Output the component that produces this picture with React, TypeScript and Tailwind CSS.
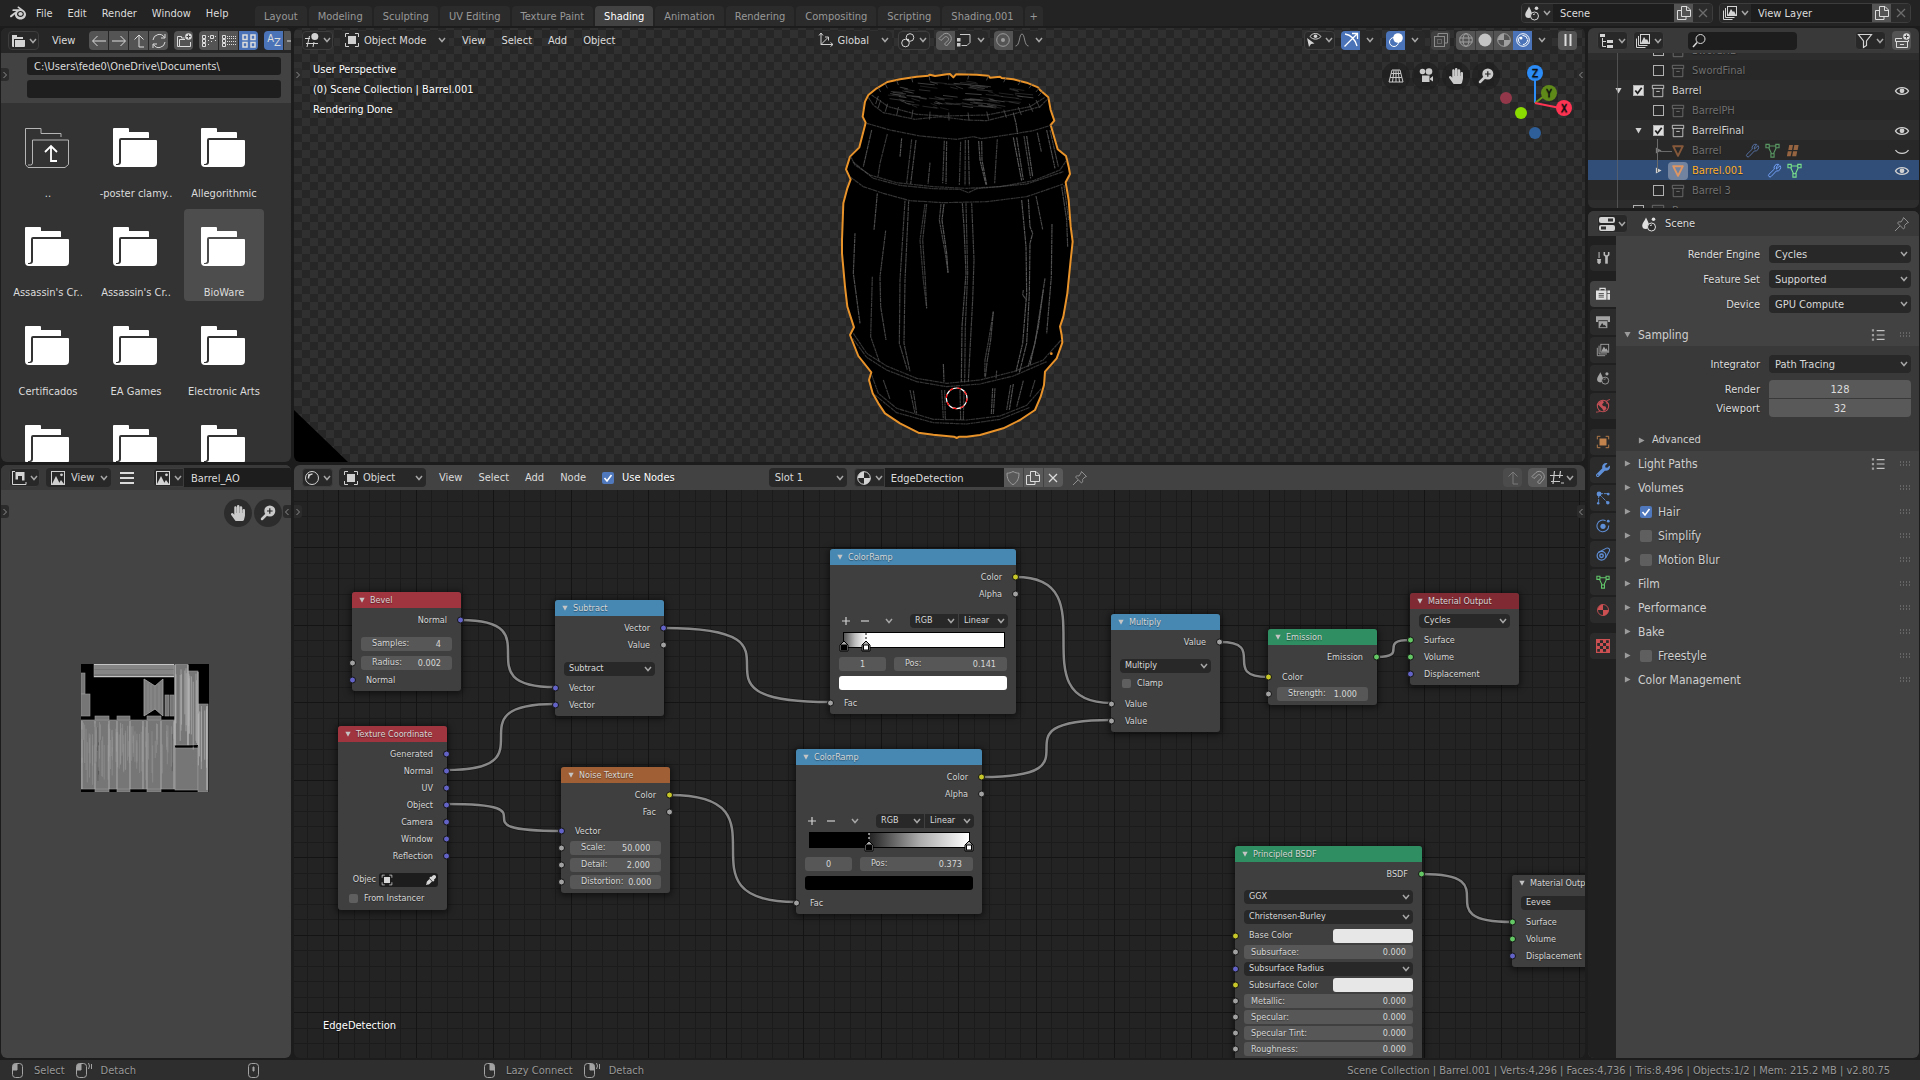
import React from 'react'
import { SiBlender } from 'react-icons/si'
import { FaHandPaper, FaEyeDropper, FaWrench } from 'react-icons/fa'
import clsx from 'clsx'

const rnd = (i: number) => {
  const v = Math.sin(i * 12.9898) * 43758.5453
  return v - Math.floor(v)
}

/* ---------- icons, all on a 16px grid ---------- */

const sceneGlyph = (
  <>
    <path d="M5 1.5C6.5 5 8 7 8 9.2A3.6 3.6 0 0 1 4.8 13 3.6 3.6 0 0 1 1.2 9.5C1.2 7 3.6 5 5 1.5Z" fill="currentColor" stroke="none" />
    <circle cx="10.5" cy="11" r="4" fill="#2b2b2b" />
    <path d="M9 10a2 2 0 0 1 2-1" />
    <circle cx="12.5" cy="3.2" r="1.8" fill="currentColor" stroke="none" />
  </>
)
const imageGlyph = (
  <>
    <rect x="1.5" y="1.5" width="13" height="13" />
    <path d="M2 14 6 6l4 8Z" fill="currentColor" stroke="none" />
    <path d="M8.5 14 11 10l3 4Z" fill="currentColor" stroke="none" />
    <circle cx="11.5" cy="4.8" r="1.4" fill="currentColor" stroke="none" />
  </>
)
const layersGlyph = (
  <>
    <rect x="5.5" y="1.5" width="9" height="9" />
    <path d="M3.5 3v9.500h9M1.500 5.500v9h9" />
    <path d="M6 10 9 4l2 3 1-1 2 4Z" fill="currentColor" stroke="none" />
  </>
)

const glyphs: Record<string, React.ReactNode> = {
  folder: (
    <>
      <path d="M2 2h5v2h6v2H4v8H3a1 1 0 0 1-1-1Z" fill="currentColor" stroke="none" />
      <path d="M5 7h10v6a1 1 0 0 1-1 1H5Z" fill="currentColor" stroke="none" />
    </>
  ),
  left: <path d="M15 8H2M6.500 3 1.500 8l5 5" />,
  right: <path d="M1 8h13M9.500 3l5 5-5 5" />,
  up: <path d="M13 14H8V2M3.500 6.500 8 2l4.500 4.500" />,
  refresh: <path d="M2 7a6.200 6.200 0 0 1 11.500-2.500M14 9a6.200 6.200 0 0 1-11.500 2.500M14 1v4H10M2 15v-4h4" />,
  newFolder: (
    <>
      <path d="M14.500 9v4.500h-11v-7H9M3.500 13.500h-2v-10h4v1.500h3" />
      <circle cx="12.500" cy="3.500" r="3.300" fill="currentColor" stroke="none" />
      <path d="M12.500 1.500v4M10.500 3.500h4" stroke="#444" />
    </>
  ),
  listV: (
    <>
      <path d="M1.500 2.500h3v3h-3zM1.500 6.500h3v3h-3zM1.500 10.500h3v3h-3zM9.500 2.500h3v3h-3z" />
      <path d="M7 3.500h1M7 7.500h1M7 11.500h1M14 3.500h1M14 7.500h1M10 8.500h2" strokeDasharray="1 1" />
    </>
  ),
  listH: (
    <>
      <path d="M1.500 2.500h3v3h-3zM1.500 6.500h3v3h-3zM1.500 10.500h3v3h-3z" />
      <path d="M6 3.500h9M6 5.500h9M6 8.500h9M6 11.500h9" strokeDasharray="1 1" />
    </>
  ),
  thumbs: <path strokeWidth="1.500" d="M2 2h4v4.500H2zM10 2h4v4.500h-4zM2 9.500h4V14H2zM10 9.500h4V14h-4z" />,
  view3d: (
    <>
      <path d="M1 6.500h5M2 11.500h12M5.500 4 3 15M10 10 9 15" />
      <circle cx="10.800" cy="4.500" r="3.500" fill="currentColor" stroke="none" />
    </>
  ),
  object: (
    <>
      <path d="M1.500 5V1.500H5M11 1.500h3.500V5M14.500 11v3.500H11M5 14.500H1.500V11" />
      <rect x="4" y="4" width="8" height="8" fill="currentColor" stroke="none" />
    </>
  ),
  orient: <path d="M3 1v11.500h12M1 3.500 3 1l2 2.500M12.500 10.500l2.500 2-2.500 2M3 12.500l7-7M7 5h3.500v3.500" />,
  pivot: (
    <>
      <circle cx="10" cy="5.500" r="3.800" />
      <circle cx="5.500" cy="11" r="3.800" />
      <circle cx="8" cy="8" r="1.200" fill="currentColor" stroke="none" />
    </>
  ),
  magnet: <path d="M2 6.500 6 2.500c5-4 11 3 7 7.500L9.500 14 7.500 12l3.500-3.500c2-2-1.500-5-3.200-3.500L4 8.500Z" />,
  snap: (
    <>
      <path d="M4 2.500h10v8l-3 3H5.500" />
      <path d="M1 6h3.500v3.500H1zM1 11h3.500v3.500H1z" fill="currentColor" stroke="none" />
    </>
  ),
  prop: (
    <>
      <circle cx="8" cy="8" r="6.300" />
      <circle cx="8" cy="8" r="2" fill="currentColor" stroke="none" />
    </>
  ),
  curve: <path d="M1.500 14C6 14 5 2 8 2s2 12 6.500 12" />,
  visibility: (
    <>
      <path d="M4 4.500C6.500.5 12 .5 15 4.500 12 8 7 8 4 4.500Z" />
      <circle cx="9.500" cy="4.300" r="1.800" fill="currentColor" stroke="none" />
      <path d="m1 6 2 9 2-3 3.500-.5Z" fill="currentColor" stroke="none" />
    </>
  ),
  gizmo: <path strokeWidth="1.300" d="M2 2c6 1 10 5 12 12M1.500 14.500 14 2M9 1.500h5.500V7" />,
  overlay: (
    <>
      <circle cx="6" cy="10" r="4.500" />
      <circle cx="10" cy="6" r="4.800" fill="currentColor" stroke="none" />
    </>
  ),
  xray: (
    <>
      <path d="M5 4V1.500h9.500V11H12" />
      <rect x="1.500" y="4.500" width="10" height="10" />
      <rect x="4.500" y="7.500" width="4" height="4" strokeDasharray="1 1" />
    </>
  ),
  wire: (
    <>
      <circle cx="8" cy="8" r="6.300" />
      <ellipse cx="8" cy="8" rx="3" ry="6.300" />
      <path d="M1.500 6h13M1.500 10h13" />
    </>
  ),
  solid: <circle cx="8" cy="8" r="6.500" fill="currentColor" stroke="none" />,
  matprev: (
    <>
      <circle cx="8" cy="8" r="6.300" />
      <path d="M8 1.500A6.500 6.500 0 0 0 2 8h6ZM8 8h6.500A6.500 6.500 0 0 1 8 14.500Z" fill="currentColor" stroke="none" />
    </>
  ),
  rendered: (
    <>
      <circle cx="8" cy="8" r="6.300" />
      <circle cx="8" cy="8" r="4.500" strokeDasharray="7 3" />
      <circle cx="6" cy="6" r="1.500" fill="currentColor" stroke="none" />
    </>
  ),
  shader: (
    <>
      <circle cx="8" cy="8" r="6.500" />
      <path d="M4.500 8.500A4 4 0 0 1 8.500 4" strokeWidth="1.500" />
      <circle cx="5" cy="5" r="1" fill="currentColor" stroke="none" />
    </>
  ),
  pause: <path strokeWidth="2" d="M5.500 2v12M10.500 2v12" />,
  grid: <path d="M4 2h8l3 12H1ZM3.200 5.500h9.600M2.200 9.500h11.600M8 2v12M6 2 4.500 14M10 2l1.500 12" />,
  camera: (
    <>
      <circle cx="4.500" cy="3.500" r="2.800" fill="currentColor" stroke="none" />
      <circle cx="11" cy="3.500" r="3.300" fill="currentColor" stroke="none" />
      <path d="M4 7.500h7.500V14H4zM12 10.500l3-2.500v5.500l-3-2Z" fill="currentColor" stroke="none" />
    </>
  ),
  zoom: (
    <>
      <circle cx="9.800" cy="6" r="5.500" fill="currentColor" stroke="none" />
      <path d="M6 10 2 14" strokeWidth="2.500" strokeLinecap="round" />
      <path d="M9.800 3.200v5.600M7 6h5.600" stroke="#222" strokeWidth="1.200" />
    </>
  ),
  scene: sceneGlyph,
  image: imageGlyph,
  layers: layersGlyph,
  copy: <path d="M5.500 1.500H11L14.500 5v6.500h-9zM10.500 2v3.500H14M5 5.500H1.500v9h8.500V12" />,
  close: <path strokeWidth="1.300" d="m4 4 8 8M12 4l-8 8" />,
  outliner: (
    <>
      <path d="M1 1h5v3H1zM8 7h6v3H8zM8 12h6v3H8z" fill="currentColor" stroke="none" />
      <path d="M3.500 5v8.500H7M3.500 8.500H7" />
    </>
  ),
  search: (
    <>
      <circle cx="9.500" cy="6" r="4.500" />
      <path d="M6 9.500 2 14" strokeWidth="1.500" />
    </>
  ),
  filter: <path d="M1.500 1.500h13L9.500 8v4.500l-3 2V8Z" strokeWidth="1.200" />,
  collection: <path d="M1.500 1.500h13v3.500h-13zM2.500 5v9.500h11V5M6 8.500h4" />,
  newCollection: (
    <>
      <path d="M8 5.500H1.500v3h13V7M2.500 8.500v6h11v-6M6 11.500h4" />
      <circle cx="12.500" cy="3.500" r="3.300" fill="currentColor" stroke="none" />
      <path d="M12.500 1.500v4M10.500 3.500h4" stroke="#444" />
    </>
  ),
  mesh: <path strokeWidth="2.200" strokeLinejoin="round" d="M2.500 2.500h11L8 13.500Z" />,
  wrench: <path d="M10 6.500 14 2.800A3.800 3.800 0 0 1 10 8.500l-5.500 5.800a1.600 1.600 0 0 1-2.500-2.200L7.800 6.500A3.800 3.800 0 0 1 12.500 1.500L10 4.300Z" />,
  meshData: <path strokeWidth="1.200" d="M1 1.500h3.500V5H1zM11.500 1.500H15V5h-3.500zM6.300 11.500h3.400V15H6.300zM4.500 3.200h7M4 5l3 6.500M12 5 9 11.500" />,
  lattice: <path d="M4.500 2h4L7.500 7.500h-4ZM10 2h4.500l-1 5.500H9ZM3 8.800h4.200L6 14H2ZM8.600 8.800H13l-1 5.200H7.600Z" fill="currentColor" stroke="none" />,
  eye: (
    <>
      <path d="M1.500 8C4 3.500 12 3.500 14.500 8 12 12.500 4 12.500 1.500 8Z" strokeWidth="1.400" />
      <circle cx="8" cy="7.800" r="2.400" fill="currentColor" stroke="none" />
    </>
  ),
  eyeClosed: <path d="M1.500 7C4 11.500 12 11.500 14.500 7" strokeWidth="1.200" />,
  properties: (
    <>
      <rect x="0" y="1" width="16" height="6" rx="2" fill="currentColor" stroke="none" />
      <rect x="0" y="9" width="16" height="6" rx="2" fill="currentColor" stroke="none" />
      <path d="M9 4h5M2 12h5" stroke="#333" strokeWidth="3" />
    </>
  ),
  pin: <path d="m9.500 1.500 5 5-1.500.5-2.500 2.500c.5 2 0 3-1 3.500L3.500 7c.5-1 1.500-1.500 3.500-1L9 3ZM6 10l-5 5" />,
  tools: (
    <>
      <path d="M3.500 1v7" strokeWidth="1.200" />
      <path d="M1 9h5l-.5 1.500v3l-2 1.500-2-1.500v-3Z" fill="currentColor" stroke="none" />
      <path d="M12 6v8.500" strokeWidth="3" />
      <path d="M9.500 1v3.500l2.500 2 2.500-2V1" strokeWidth="1.800" />
    </>
  ),
  render: (
    <>
      <path d="M4.500 4V1.500h6V4" strokeWidth="1.300" />
      <path d="M0 4h12v10.500H0zM13 4h3v3h-3zM13 8h3v6.500h-3z" fill="currentColor" stroke="none" />
      <path d="M3 7.500h6M3 9.500h6M3 11.500h6" stroke="#444" />
    </>
  ),
  output: (
    <>
      <path d="M0 1.500h16V8h-2.500V6h-11v2H0Z" fill="currentColor" stroke="none" />
      <path d="M3 7h10v8H3z" fill="currentColor" stroke="none" />
      <path d="m4 14 3-5 2 3 1-1 2 3Z" fill="#2b2b2b" stroke="none" />
    </>
  ),
  world: (
    <>
      <circle cx="8" cy="8" r="6.500" strokeWidth="1.200" />
      <path d="M2 6C4 3 6 2 8 2l1 2-2 2 1 2 3 .5 1 2.500-3 3c-2-2-1-3-3-4Z M11 2.500 14 6l-2-.5Z" fill="currentColor" stroke="none" />
      <path d="M0 15c3 0 4-1 5-1M12 2l4-1.500" />
    </>
  ),
  particles: (
    <>
      <path d="M3 3v10M3 3h11M3 3l10 10" strokeDasharray="5 1" />
      <circle cx="3.500" cy="3.500" r="2.800" fill="currentColor" stroke="none" />
      <circle cx="14" cy="3.500" r="1.600" fill="currentColor" stroke="none" />
      <circle cx="13.500" cy="13.500" r="2" fill="currentColor" stroke="none" />
      <circle cx="2.500" cy="14" r="1.400" fill="currentColor" stroke="none" />
    </>
  ),
  physics: (
    <>
      <path d="M11 2A6.700 6.700 0 1 0 14.500 7.500" strokeWidth="1.200" />
      <circle cx="8" cy="8.300" r="3" fill="currentColor" stroke="none" />
      <circle cx="14" cy="2.500" r="1.600" fill="currentColor" stroke="none" />
    </>
  ),
  constraints: (
    <>
      <path d="M2.500 6.200 12 1.300a2.500 2.500 0 0 1 3.200 3.500L11 12.500" strokeWidth="1.200" />
      <circle cx="6.300" cy="10" r="5" strokeWidth="1.400" />
      <circle cx="6.300" cy="10" r="2" strokeWidth="1.600" />
    </>
  ),
  texture: (
    <>
      <rect x=".7" y=".7" width="14.600" height="14.600" strokeWidth="1.400" />
      <path d="M1 1h3.500v3.500H1zM8 1h3.500v3.500H8zM4.500 4.500H8V8H4.500zM11.500 4.500H15V8h-3.500zM1 8h3.500v3.500H1zM8 8h3.500v3.500H8zM4.500 11.500H8V15H4.500zM11.500 11.500H15V15h-3.500z" fill="currentColor" stroke="none" />
    </>
  ),
  uvEditor: (
    <>
      <path d="M1.500 1v13.500H15V12M1.500 1.500H4" />
      <path d="M4.500 2h9v8.500h-2.500V6H7v3.500H4.500Z" fill="currentColor" stroke="none" />
    </>
  ),
  burger: <path strokeWidth="2" d="M1 3h14M1 8h14M1 13h14" />,
  shield: <path d="M8 1.500c2 1.200 4 1.700 6 1.700 0 5-1.500 9-6 11.500-4.500-2.500-6-6.500-6-11.500 2 0 4-.5 6-1.700Z" />,
  presets: (
    <>
      <path d="M6.500 3h9M6.500 8h9M6.500 13h9" strokeWidth="1.200" />
      <path d="M1 1.500h2.500v2.500H1zM1 6.800h2.500v2.500H1zM1 12h2.500v2.500H1z" fill="currentColor" stroke="none" opacity=".7" />
    </>
  ),
  nodeSnap: <path d="M1 5.500h13M2 11.500h9M5.500 1 4 14M11.500 1l-1 7M12 13h3" strokeWidth="1.200" />,
}

const Icon = ({ name, className }: { name: string; className?: string }) => (
  <svg viewBox="0 0 16 16" fill="none" stroke="currentColor" className={clsx('shrink-0', className || 'h-4 w-4')}>
    {glyphs[name]}
  </svg>
)

const Chevron = ({ className }: { className?: string }) => (
  <svg viewBox="0 0 8 6" fill="none" stroke="currentColor" strokeWidth="1.500" className={clsx('h-[6px] w-2 shrink-0 text-[#a6a6a6]', className)}>
    <path d="m1 1 3 3.500L7 1" />
  </svg>
)

const Triangle = ({ open, className }: { open?: boolean; className?: string }) => (
  <svg viewBox="0 0 8 8" className={clsx('shrink-0', className || 'h-[7px] w-[7px] text-[#9c9c9c]')}>
    <path d={open ? 'M.5 1h7L4 7.500Z' : 'M1 .5v7L7.500 4Z'} fill="currentColor" />
  </svg>
)

/* ---------- widgets ---------- */

type WidgetProps = { icon?: string; label: string; className?: string; children?: React.ReactNode }

const MenuButton = ({ icon, label, className }: WidgetProps) => (
  <button aria-label={label} className={clsx('flex h-[19px] shrink-0 items-center justify-center gap-[3px] rounded-[4px] border border-[#3d3d3d] bg-[#282828] text-[#d4d4d4]', className || 'w-[31px]')}>
    {icon && <Icon name={icon} />}
    <Chevron />
  </button>
)

const ToolButton = ({ icon, label, className, children }: WidgetProps) => (
  <button aria-label={label} className={clsx('flex h-[19px] w-[19px] shrink-0 items-center justify-center', className)}>
    {icon ? <Icon name={icon} /> : children}
  </button>
)

type SelectProps = { label: string; value: string; icon?: string; className?: string; pad?: string }

const Select = ({ label, value, icon, className, pad }: SelectProps) => (
  <div className={clsx('relative flex shrink-0 items-center rounded-[4px] bg-[#282828]', className)}>
    {icon && <Icon name={icon} className="pointer-events-none absolute left-1 h-4 w-4 text-[#cfcfcf]" />}
    <select aria-label={label} defaultValue={value} className={clsx('h-full w-full appearance-none text-[#d9d9d9] outline-none', pad || 'pl-[6px] pt-px')}>
      <option>{value}</option>
    </select>
    <Chevron className="pointer-events-none absolute right-[3px]" />
  </div>
)

const CheckBox = ({ id, checked, className }: { id: string; checked?: boolean; className?: string }) => (
  <span className={clsx('relative flex shrink-0', className || 'h-3 w-3')}>
    <input id={id} type="checkbox" defaultChecked={checked} className="peer h-full w-full appearance-none rounded-[2px] bg-[#5f5f5f] checked:bg-[#4f78bd]" />
    <svg viewBox="0 0 12 12" className="pointer-events-none absolute hidden h-full w-full peer-checked:block" fill="none" stroke="#fff" strokeWidth="1.600">
      <path d="m2.500 6 2.500 3 4.500-6" />
    </svg>
  </span>
)

const MenuText = ({ children }: { children: string }) => <button className="shrink-0 pt-px">{children}</button>

const RegionTab = ({ right, className }: { right?: boolean; className?: string }) => (
  <button aria-label="Toggle region" className={clsx('absolute z-10 flex h-[13px] w-2 items-center justify-center bg-[#2b2b2b] text-[#8c8c8c]', right ? 'right-0 rounded-l-[3px]' : 'left-0 rounded-r-[3px]', className)}>
    <svg viewBox="0 0 6 8" className="h-2 w-[6px]" fill="none" stroke="currentColor">
      <path d={right ? 'M4.500 1 1.500 4l3 3' : 'M1.500 1l3 3-3 3'} />
    </svg>
  </button>
)

const NavButton = ({ label, children }: { label: string; children: React.ReactNode }) => (
  <button aria-label={label} className="flex h-7 w-7 items-center justify-center rounded-full bg-[#1c1c1c]/60 text-[#cacaca]">{children}</button>
)

/* ---------- top bar ---------- */

const tabs = ['Layout', 'Modeling', 'Sculpting', 'UV Editing', 'Texture Paint', 'Shading', 'Animation', 'Rendering', 'Compositing', 'Scripting', 'Shading.001', '+']

const IdField = ({ icon, label }: { icon: string; label: string }) => (
  <div className="flex h-5 shrink-0 items-center overflow-hidden rounded-[4px] border border-[#3d3d3d]">
    <button aria-label={`Browse ${label}`} className="flex h-full w-[31px] items-center justify-center gap-[3px] bg-[#282828] text-[#d4d4d4]">
      <Icon name={icon} />
      <Chevron />
    </button>
    <input aria-label={label} defaultValue={label} className="h-full w-[121px] bg-[#1d1d1d] pl-[7px] outline-none" />
    <ToolButton icon="copy" label={`New ${label}`} className="bg-[#545454]" />
    <ToolButton icon="close" label={`Remove ${label}`} className="bg-[#2b2b2b] text-[#6d6d6d]" />
  </div>
)

const TopBar = () => (
  <header className="flex h-[26px] shrink-0 items-center bg-[#232323]">
    <SiBlender className="ml-[10px] h-4 w-4 shrink-0 text-[#cfcfcf]" />
    <nav className="ml-[10px] flex w-[219px] gap-[15px]">
      {['File', 'Edit', 'Render', 'Window', 'Help'].map((m) => (
        <MenuText key={m}>{m}</MenuText>
      ))}
    </nav>
    <div className="flex h-5 gap-[2px] self-end">
      {tabs.map((t) => (
        <button
          key={t}
          className={clsx('shrink-0 rounded-t-[4px] pt-px', t === '+' ? 'px-[5px]' : 'px-[9px]', t === 'Shading' ? 'bg-[#424242] text-white' : 'bg-[#2b2b2b] text-[#989898]')}
        >
          {t}
        </button>
      ))}
    </div>
    <div className="ml-auto flex gap-[6px] pr-[9px]">
      <IdField icon="scene" label="Scene" />
      <IdField icon="layers" label="View Layer" />
    </div>
  </header>
)

/* ---------- file browser ---------- */

const files = ['..', '-poster clamy..', 'Allegorithmic', "Assassin's Cr..", "Assassin's Cr..", 'BioWare', 'Certificados', 'EA Games', 'Electronic Arts', '', '', '']

const FolderArt = ({ parent }: { parent?: boolean }) => (
  <svg viewBox="0 0 44 40" className="h-10 w-11">
    {parent ? (
      <g fill="none" stroke="#b5b5b5">
        <path d="M36 9V5.500H16V.5H.5v36L3 39.500h37l3.500-3V12H7.500v23q0 2-2 2H3" />
        <path d="M32 33h-6V18M20 24l6-6 6 6" stroke="#fff" strokeWidth="1.800" />
      </g>
    ) : (
      <path
        fill="#fff"
        d="M0 1q0-1 1-1h14q1 0 1 1v3h19q1 0 1 1v5H8q-2 0-2 2v22q0 2-3 2v1h2q3 0 3-3V12h35q1 0 1 1v22q0 4-4 4H4q-4 0-4-4Z"
      />
    )}
  </svg>
)

const group = 'flex shrink-0 gap-px overflow-hidden rounded-[4px]'
const toolGrey = 'bg-[#545454]'

const FileBrowser = () => (
  <section className="relative flex w-[290px] shrink-0 flex-col overflow-hidden rounded-[6px] bg-[#333333]">
    <div className="flex h-[25px] shrink-0 items-center overflow-hidden bg-[#262626] pl-[7px]">
      <MenuButton icon="folder" label="Editor type" />
      <span className="ml-[13px] mr-[14px]"><MenuText>View</MenuText></span>
      <div className={group}>
        <ToolButton icon="left" label="Back" className={toolGrey} />
        <ToolButton icon="right" label="Forward" className={toolGrey} />
        <ToolButton icon="up" label="Parent directory" className={toolGrey} />
        <ToolButton icon="refresh" label="Refresh" className={toolGrey} />
      </div>
      <ToolButton icon="newFolder" label="New folder" className="ml-[6px] rounded-[4px] bg-[#545454]" />
      <div className={clsx(group, 'ml-[6px]')}>
        <ToolButton icon="listV" label="Short list" className={toolGrey} />
        <ToolButton icon="listH" label="Long list" className={toolGrey} />
        <ToolButton icon="thumbs" label="Thumbnails" className="bg-[#4b74b8]" />
      </div>
      <div className={clsx(group, 'ml-[6px]')}>
        <ToolButton label="Sort by name" className="bg-[#4b74b8]">
          <span className="pb-1">A</span><span className="pt-1">Z</span>
        </ToolButton>
        <ToolButton icon="right" label="Sort by extension" className={toolGrey} />
      </div>
    </div>
    <div className="flex h-[50px] shrink-0 flex-col gap-[5px] bg-[#424242] pl-[26px] pr-[10px] pt-1">
      <input aria-label="Directory" defaultValue="C:\Users\fede0\OneDrive\Documents\" className="h-[18px] rounded-[3px] bg-[#1e1e1e] pl-[7px] outline-none" />
      <input aria-label="File name" className="h-[18px] rounded-[3px] bg-[#1e1e1e] pl-[7px] outline-none" />
    </div>
    <div className="flex flex-wrap content-start gap-x-2 gap-y-[7px] pl-[7px] pt-[7px]">
      {files.map((name, i) => (
        <button key={i} className={clsx('flex h-[92px] w-20 flex-col items-center rounded-[4px] pt-[18px]', i === 5 && 'bg-[#4d4d4d]')}>
          <span className="pr-[3px]"><FolderArt parent={i === 0} /></span>
          <span className="mt-[18px] whitespace-nowrap">{name}</span>
        </button>
      ))}
    </div>
    <RegionTab className="top-10" />
  </section>
)

/* ---------- 3D viewport ---------- */

const outline =
  'M197 188 188 170 195 125 205 105 230 85 262 66 300 58 350 50 385 47 390 44 405 48 440 43 450 42 460 52 468 43 530 44 565 47 570 53 600 50 605 54 640 58 680 68 714 82 720 90 745 112 752 150 763 182 752 195 773 268 798 288 806 320 810 342 797 367 806 420 812 500 818 545 812 600 802 700 790 770 780 800 785 825 787 848 770 895 735 935 732 975 722 1010 705 1050 660 1080 610 1105 540 1125 500 1130 478 1130 470 1134 462 1130 400 1124 355 1118 300 1090 255 1060 235 1030 218 1000 207 960 214 937 175 888 150 825 162 802 142 740 135 680 126 580 126 540 130 430 142 385 152 358 138 328 150 290 178 262 190 215Z'

const hoops = [
  'M205 112 220 135 250 158 345 178 420 170 500 180 560 182 640 162 720 140 745 115',
  'M215 105 265 140 350 163 430 168 560 165 690 140 735 112',
  'M200 190 270 210 360 228 470 238 520 230 545 236 620 225 700 212 755 195',
  'M152 290 165 315 210 345 290 368 400 380 500 385 600 380 700 362 780 330 800 300',
  'M158 305 220 355 300 376 400 386 480 388 505 398 530 386 680 372 790 335',
  'M152 352 190 380 250 400 330 422 430 428 560 425 680 410 790 372',
  'M160 820 200 880 260 918 350 955 440 970 540 960 640 935 730 900 785 838',
  'M158 835 200 892 260 930 350 965 440 980 540 972 640 948 740 905',
  'M215 945 235 1000 290 1045 400 1078 500 1080 600 1068 680 1036 725 985',
  'M225 1005 290 1058 400 1088 500 1092 600 1078 690 1042',
]

const staves = [
  'M262 222 240 310 234 350', 'M305 235 300 290', 'M335 238 320 370', 'M348 240 332 372', 'M390 308 384 372',
  'M433 242 428 370', 'M440 244 438 372', 'M482 245 478 375', 'M496 240 495 376', 'M505 240 508 376',
  'M536 243 540 300 558 374', 'M545 243 546 300 560 374', 'M592 238 588 300 584 370', 'M640 232 665 362', 'M650 232 670 360',
  'M672 228 692 355', 'M680 228 698 350', 'M712 218 724 275', 'M740 210 765 325', 'M750 210 775 320',
  'M640 158 648 190 653 222', 'M215 210 190 320', 'M232 400 222 510', 'M257 512 240 650 242 740 258 840', 'M217 650 212 830 238 905',
  'M315 422 300 660 298 850 322 930', 'M326 424 315 660 312 850 330 935', 'M375 432 360 540 370 660 380 745', 'M380 432 368 540 376 660 380 745',
  'M423 432 418 480 436 580 444 638', 'M432 432 426 480 440 580 444 638', 'M487 430 492 500 498 640 486 800 484 965', 'M498 430 503 640 496 800 494 968',
  'M515 430 522 600 518 720 505 965', 'M580 755 566 840 555 900 554 950', 'M580 755 572 840 562 900 556 952', 'M665 420 678 560 680 700 668 850 648 935',
  'M685 418 690 500 698 520 690 550 688 700 680 850 658 938', 'M708 408 728 508', 'M756 492 754 650 740 820', 'M735 655 705 850 684 920', 'M730 690 715 800 690 915',
  'M785 380 800 480 803 560', 'M792 375 806 480', 'M165 520 160 640 180 790', 'M430 912 432 965', 'M590 932 588 955', 'M670 690 668 705 680 720',
  'M425 990 430 1075', 'M434 990 436 1078', 'M480 990 482 1080', 'M492 990 490 1080', 'M578 985 574 1062', 'M585 985 580 1062',
  'M632 975 620 1050', 'M640 972 628 1050', 'M670 962 650 1040', 'M330 990 345 1060', 'M340 992 350 1060', 'M250 960 270 1018', 'M705 960 690 1010',
]

const Barrel = () => (
  <svg viewBox="0 0 900 1170" className="absolute left-[506px] top-[32px] h-[390px] w-[300px]" fill="none">
    <path d={outline} fill="#000" stroke="#e8922a" strokeWidth="6" strokeLinejoin="round" />
    <g stroke="#585858" strokeWidth="3.500" strokeDasharray="9 1 5 1 13 2">
      {hoops.map((d) => <path key={d} d={d} opacity=".6" />)}
      {staves.map((d, i) => <path key={d} d={d} opacity={0.65 + rnd(i) * 0.35} />)}
    </g>
    <g stroke="#4e4e4e" strokeWidth="2.500">
      {Array.from({ length: 90 }, (_, i) => {
        const t = rnd(i + 7) * 6.28
        const r = Math.sqrt(rnd(i + 300))
        const x = 460 + Math.cos(t) * r * 205
        const y = 104 + Math.sin(t) * r * 42
        return <path key={i} opacity={0.4 + rnd(i + 40) * 0.6} d={`M${x} ${y}l${15 + rnd(i + 90) * 40} ${3 + rnd(i) * 5}`} />
      })}
      {Array.from({ length: 26 }, (_, i) => {
        const t = (i / 26) * 6.28
        const x = 475 + Math.cos(t) * 240
        const y = 108 + Math.sin(t) * 50
        return <path key={i} d={`M${x} ${y}l${Math.cos(t) * 10 + 2} ${Math.sin(t) > 0 ? 24 : -14}`} />
      })}
    </g>
    <circle cx="754" cy="881" r="4" fill="#e8922a" />
    <circle cx="470" cy="1015" r="31" stroke="#fff" strokeWidth="3.500" />
    <circle cx="470" cy="1015" r="31" stroke="#f00" strokeWidth="3.500" strokeDasharray="12.200" />
  </svg>
)

const Gizmo = () => (
  <svg viewBox="5 0 75 90" className="h-[90px] w-[75px]">
    <path d="M40 43V14" stroke="#2b8cf7" strokeWidth="2" />
    <path d="m40 43 13-10" stroke="#6a921d" strokeWidth="2" />
    <path d="m40 43 25 5" stroke="#ff3352" strokeWidth="2" />
    <circle cx="11" cy="38" r="6" fill="#93384a" />
    <circle cx="26" cy="53" r="6" fill="#8bdc00" />
    <circle cx="40" cy="73" r="6" fill="#2f5f98" />
    <circle cx="54" cy="33" r="8" fill="#5f8a1a" />
    <circle cx="40" cy="13" r="8" fill="#2b8cf7" />
    <circle cx="69" cy="48" r="8" fill="#ff3352" />
    <g fontSize="10" textAnchor="middle" fill="#111" stroke="#111" strokeWidth=".4">
      <text x="40" y="17">Z</text>
      <text x="54" y="37">Y</text>
      <text x="69" y="52">X</text>
    </g>
  </svg>
)

const toolGroup = 'flex h-[19px] shrink-0 items-center overflow-hidden rounded-[4px] bg-[#282828] text-[#c9c9c9]'

const ChevronCell = () => (
  <button aria-label="Options" className="flex h-full w-5 items-center justify-center"><Chevron /></button>
)

const Viewport = () => (
  <section className="relative flex min-w-0 flex-1 flex-col overflow-hidden rounded-[6px] bg-[repeating-conic-gradient(#262626_0_25%,#303030_0_50%)] bg-[length:16px_16px] bg-[position:0_2px]">
    <Barrel />
    <svg viewBox="0 0 54 52" className="absolute bottom-0 left-0 h-[52px] w-[54px]"><path d="M0 0 54 52H0Z" /></svg>
    <div className="relative flex h-[25px] shrink-0 items-center pl-2 pr-2 pb-px">
      <div className="flex flex-1 items-center">
        <MenuButton icon="view3d" label="Editor type" />
        <Select label="Mode" value="Object Mode" icon="object" className="ml-[7px] h-[19px] w-[109px]" pad="pl-6 pt-px" />
        <nav className="ml-[13px] flex gap-4">
          {['View', 'Select', 'Add', 'Object'].map((m) => <MenuText key={m}>{m}</MenuText>)}
        </nav>
      </div>
      <div className="mr-5 flex shrink-0 gap-[6px]">
        <Select label="Orientation" value="Global" icon="orient" className="h-[19px] w-[78px]" pad="pl-6 pt-px" />
        <MenuButton icon="pivot" label="Pivot point" className="w-8" />
        <div className={toolGroup}>
          <ToolButton icon="magnet" label="Snap" className="bg-[#545454] text-[#9c9c9c]" />
          <ToolButton icon="snap" label="Snap target" />
          <Chevron className="mx-[3px]" />
        </div>
        <div className={toolGroup}>
          <ToolButton icon="prop" label="Proportional editing" className="bg-[#545454] text-[#9c9c9c]" />
          <ToolButton icon="curve" label="Falloff" className="text-[#8c8c8c]" />
          <Chevron className="mx-[3px]" />
        </div>
      </div>
      <div className="flex flex-1 justify-end gap-[6px]">
        <MenuButton icon="visibility" label="Object visibility" />
        <div className={toolGroup}><ToolButton icon="gizmo" label="Gizmos" className="bg-[#4b74b8] text-white" /><ChevronCell /></div>
        <div className={toolGroup}><ToolButton icon="overlay" label="Overlays" className="bg-[#4b74b8] text-white" /><ChevronCell /></div>
        <ToolButton icon="xray" label="X-ray" className="rounded-[4px] bg-[#404040] text-[#8c8c8c]" />
        <div className={toolGroup}>
          <ToolButton icon="wire" label="Wireframe" className="bg-[#545454] text-[#a0a0a0]" />
          <ToolButton icon="solid" label="Solid" className="border-x border-[#3a3a3a] bg-[#545454] text-[#c4c4c4]" />
          <ToolButton icon="matprev" label="Material preview" className="bg-[#545454] text-[#a0a0a0]" />
          <ToolButton icon="rendered" label="Rendered" className="bg-[#4b74b8] text-white" />
          <ChevronCell />
        </div>
        <ToolButton icon="pause" label="Pause" className="rounded-[4px] bg-[#545454]" />
      </div>
    </div>
    <div className="relative flex justify-between pl-[19px] pr-[10px] pt-[7px]">
      <div className="leading-5 text-white">
        <p>User Perspective</p>
        <p>(0) Scene Collection | Barrel.001</p>
        <p>Rendering Done</p>
      </div>
      <div className="flex">
        <div className="flex gap-[2px] pt-[2px]">
          <NavButton label="Toggle orthographic"><Icon name="grid" /></NavButton>
          <NavButton label="Camera view"><Icon name="camera" /></NavButton>
          <NavButton label="Pan"><FaHandPaper className="h-4 w-4" /></NavButton>
          <NavButton label="Zoom"><Icon name="zoom" /></NavButton>
        </div>
        <Gizmo />
      </div>
    </div>
    <RegionTab className="top-10" />
    <RegionTab right className="top-10" />
  </section>
)

/* ---------- image editor ---------- */

const planks = [
  [13, 0, 80, 13], [0, 9, 4, 21], [0, 30, 9, 22], [94, 0, 13, 81], [107, 7, 10, 74], [94, 84, 23, 42], [117, 40, 10, 88],
  [14, 52, 14, 76], [36, 52, 13, 76], [66, 52, 14, 76], [0, 56, 94, 69], [84, 31, 4, 21], [89, 31, 4, 21],
]

const TextureArt = () => (
  <svg viewBox="0 0 128 128" className="absolute left-20 top-[174px] h-32 w-32">
    <rect width="128" height="128" />
    {planks.map(([x, y, w, h], i) => (
      <rect key={i} x={x} y={y} width={w} height={h} fill="#767676" stroke="#999" strokeWidth=".6" />
    ))}
    <path d="M63 15 74 22 82 15V52L74 45 63 52Z" fill="#7d7d7d" stroke="#a8a8a8" strokeWidth=".8" />
    <path d="M67 19v29M70 21v25M74 22v23M78 20v28" stroke="#9a9a9a" strokeWidth=".6" />
    {[2, 4, 7, 9].map((y) => <path key={y} d={`M13 ${y}h80`} stroke="#a3a3a3" strokeWidth=".7" />)}
    <path d="M13 12.500h80M13 .5h80" stroke="#c4c4c4" />
    {Array.from({ length: 80 }, (_, i) => {
      const x = 1 + rnd(i) * 92
      const y = 58 + rnd(i + 50) * 25
      return <path key={i} d={`M${x} ${y}v${15 + rnd(i + 99) * 27}`} stroke={i % 12 ? '#959595' : '#505050'} strokeWidth=".6" />
    })}
    {[1, 14, 28, 36, 49, 62, 66, 80, 93].map((x) => <path key={x} d={`M${x} 57v68`} stroke="#b0b0b0" strokeWidth=".9" />)}
    {Array.from({ length: 22 }, (_, i) => {
      const x = 95 + rnd(i + 11) * 31
      const top = x > 117 ? 42 : x > 107 ? 8 : 1
      return <path key={i} d={`M${x} ${top + rnd(i) * 10}v${40 + rnd(i + 3) * 28}`} stroke="#a8a8a8" strokeWidth=".8" />
    })}
    <path d="M94 1v80M107 1v80M117 8v74M126 42v84" stroke="#c9c9c9" strokeWidth=".9" />
    <path d="M94 82.500h14l9-1" stroke="#000" strokeWidth="1.200" fill="none" />
  </svg>
)

const ImageEditor = () => (
  <section className="relative flex w-[290px] shrink-0 flex-col overflow-hidden rounded-[6px] bg-[#444444]">
    <div className="flex h-[25px] shrink-0 items-center overflow-hidden bg-[#393939] pl-2">
      <MenuButton icon="uvEditor" label="Editor type" />
      <Select label="Mode" value="View" icon="image" className="ml-[6px] h-[19px] w-[65px]" pad="pl-[25px] pt-px" />
      <ToolButton icon="burger" label="Menu" className="ml-[6px]" />
      <MenuButton icon="image" label="Browse image" className="ml-[17px] w-[31px] rounded-r-none" />
      <input aria-label="Image name" defaultValue="Barrel_AO" className="h-[19px] w-[120px] shrink-0 bg-[#1d1d1d] pl-[7px] pt-px outline-none" />
    </div>
    <div className="relative flex flex-1 items-start justify-end gap-[2px] pr-[9px] pt-[9px]">
      <NavButton label="Pan"><FaHandPaper className="h-4 w-4" /></NavButton>
      <NavButton label="Zoom"><Icon name="zoom" /></NavButton>
      <TextureArt />
      <RegionTab className="top-[15px]" />
      <RegionTab right className="top-[15px]" />
    </div>
  </section>
)

/* ---------- node editor ---------- */

const vec = 'bg-[#6363c7]'
const grey = 'bg-[#a1a1a1]'
const yellow = 'bg-[#c7c729]'
const green = 'bg-[#63c763]'

const Socket = ({ color, out }: { color: string; out?: boolean }) => (
  <i className={clsx('absolute top-1/2 h-[7px] w-[7px] -translate-y-1/2 rounded-full border border-[#151515]', color, out ? '-right-[3px]' : '-left-[3px]')} />
)

const Out = ({ label, color }: { label: string; color: string }) => (
  <div className="relative flex h-[17px] items-center justify-end pr-[14px] pt-px">{label}<Socket color={color} out /></div>
)

const In = ({ label, color, className }: { label: string; color: string; className?: string }) => (
  <div className={clsx('relative flex h-[17px] items-center pl-[14px] pt-px', className)}>{label}<Socket color={color} /></div>
)

type FieldProps = { label: string; value: string; color?: string; className?: string; tight?: boolean }

const Field = ({ label, value, color, className, tight }: FieldProps) => (
  <div className={clsx('relative flex items-center px-[9px]', tight ? 'h-4' : 'h-[17px]', className)}>
    <label className={clsx('flex h-[14px] w-full items-center justify-between rounded-[3px] bg-[#575757]', tight ? 'px-[7px]' : 'px-[11px]')}>
      {label}
      <input defaultValue={value} className="w-7 text-right outline-none" />
    </label>
    {color && <Socket color={color} />}
  </div>
)

const NodeSelect = ({ value, color, className }: { value: string; color?: string; className?: string }) => (
  <div className={clsx('relative flex h-[17px] items-center px-[9px]', className)}>
    <Select label={value} value={value} className="h-[14px] w-full" pad="pl-[5px]" />
    {color && <Socket color={color} />}
  </div>
)

const Swatch = ({ label, className }: { label: string; className?: string }) => (
  <div className={clsx('relative flex items-center justify-between pl-[14px] pr-[9px]', className)}>
    {label}
    <button aria-label={label} className="h-[14px] w-20 rounded-[3px] bg-[#e7e7e7]" />
    <Socket color={yellow} />
  </div>
)

type NodeProps = { title: string; head: string; className: string; children: React.ReactNode }

const Node = ({ title, head, className, children }: NodeProps) => (
  <article className={clsx('absolute flex flex-col rounded-[3px] bg-[#3f3f3f] pb-[3px] text-[9px] leading-none text-[#d6d6d6] shadow-[0_1px_6px_2px_rgba(0,0,0,0.5)]', className)}>
    <h2 className={clsx('mb-[3px] flex h-4 shrink-0 items-center gap-[5px] whitespace-nowrap rounded-t-[3px] pl-[7px]', head)}>
      <Triangle open className="h-[6px] w-[6px] text-[#c4c4c4]" />
      {title}
    </h2>
    {children}
  </article>
)

type RampProps = { className: string; index: string; pos: string; stops: number[]; end: number; dark?: boolean }

const RampHandle = ({ x, fill }: { x: number; fill: string }) => (
  <g>
    <path d={`M${x - 4} 19v-6l4-4 4 4v6Z`} fill="#aaa" stroke="#000" />
    <rect x={x - 2.5} y="13" width="5" height="5" fill={fill} stroke="#000" />
  </g>
)

const ColorRamp = ({ className, index, pos, stops, end, dark }: RampProps) => (
  <Node title="ColorRamp" head="bg-[#4788b3]" className={clsx('w-[186px]', className)}>
    <Out label="Color" color={yellow} />
    <Out label="Alpha" color={grey} />
    <div className="mt-[10px] flex h-[17px] items-center pl-3 pr-2">
      <button aria-label="Add stop"><svg viewBox="0 0 8 8" className="h-2 w-2" stroke="#d0d0d0" strokeWidth="1.200"><path d="M4 0v8M0 4h8" /></svg></button>
      <button aria-label="Remove stop" className="ml-[11px]"><svg viewBox="0 0 8 8" className="h-2 w-2" stroke="#d0d0d0" strokeWidth="1.200"><path d="M0 4h8" /></svg></button>
      <button aria-label="Tools" className="ml-4"><Chevron /></button>
      <Select label="Color mode" value="RGB" className="ml-auto h-[14px] w-12 rounded-r-none" pad="pl-[5px]" />
      <Select label="Interpolation" value="Linear" className="ml-px h-[14px] w-[49px] rounded-l-none" pad="pl-[5px]" />
    </div>
    <svg viewBox="0 0 169 20" className="mt-[3px] ml-[9px] h-5 w-[169px] shrink-0">
      <defs>
        <linearGradient id={`ramp${index}`} x1={stops[0]} x2={stops[1]} y1="0" y2="0" gradientUnits="userSpaceOnUse">
          <stop offset="0" stopColor={dark ? '#222' : '#555'} />
          <stop offset=".5" stopColor={dark ? '#aaa' : '#bbb'} />
          <stop offset="1" stopColor="#fff" />
        </linearGradient>
      </defs>
      <rect x="4.500" y=".5" width={end - 4} height="15" fill={`url(#ramp${index})`} stroke="#000" />
      {dark && <path d="M4 0h60v16H4z" />}
      <path d={dark ? `M${stops[0]} 1v9` : `M${stops[1]} 1v9`} stroke={dark ? '#fff' : '#000'} strokeDasharray="2 2" />
      <RampHandle x={stops[0]} fill="#000" />
      <RampHandle x={stops[1]} fill="#fff" />
    </svg>
    <div className="mt-[3px] flex h-[17px] items-center gap-2 px-[9px]">
      <input aria-label="Active stop" defaultValue={index} className="h-[14px] w-[47px] rounded-[3px] bg-[#575757] text-center outline-none" />
      <label className="flex h-[14px] min-w-0 flex-1 items-center justify-between rounded-[3px] bg-[#575757] px-[11px]">
        Pos:
        <input defaultValue={pos} className="w-7 text-right outline-none" />
      </label>
    </div>
    <button aria-label="Stop color" className={clsx('mx-[9px] mt-1 h-[14px] rounded-[3px]', dark ? 'bg-black' : 'bg-white')} />
    <In label="Fac" color={grey} className="mt-1" />
  </Node>
)

const MaterialOutput = ({ target, head, className }: { target: string; head: string; className: string }) => (
  <Node title="Material Output" head={head} className={clsx('w-[109px]', className)}>
    <NodeSelect value={target} />
    <In label="Surface" color={green} className="mt-[2px]" />
    <In label="Volume" color={green} />
    <In label="Displacement" color={vec} />
  </Node>
)

// from x, y to x, y on the node canvas
const links = [
  [167, 130, 261, 197],
  [153, 280, 261, 214],
  [153, 314, 267, 341],
  [370, 138, 536, 212],
  [376, 305, 502, 412],
  [722, 87, 817, 213],
  [688, 287, 817, 230],
  [926, 152, 974, 187],
  [1083, 167, 1116, 150],
  [1128, 384, 1218, 432],
]

const NodeBackdrop = () => (
  <svg className="absolute inset-0 h-full w-full" fill="none">
    {[false, true].map((major) => (
      <g key={String(major)} stroke={major ? '#141414' : '#1b1b1b'} shapeRendering="crispEdges">
        {Array.from({ length: 160 }, (_, i) => i).map((i) => {
          const x = Math.round(i * 15.51 - 2.5) + 0.5
          return (i % 5 === 3) === major && <path key={i} d={`M${x} 0V2000`} />
        })}
        {Array.from({ length: 100 }, (_, i) => i).map((i) => {
          const y = Math.round(i * 15.51 + 10.5) + 0.5
          return (i % 5 === 3) === major && <path key={i} d={`M0 ${y}H2600`} />
        })}
      </g>
    ))}
    {links.map(([x1, y1, x2, y2]) => {
      const d = `M${x1} ${y1}C${x2} ${y1} ${x1} ${y2} ${x2} ${y2}`
      return (
        <g key={d}>
          <path d={d} stroke="#171717" strokeWidth="4" />
          <path d={d} stroke="#888" strokeWidth="2.500" />
        </g>
      )
    })}
  </svg>
)

const NodeEditor = () => (
  <section className="relative flex min-w-0 flex-1 flex-col overflow-hidden rounded-[6px] bg-[#232323]">
    <div className="flex h-[25px] shrink-0 items-center bg-[#424242] pl-2 pr-2">
      <MenuButton icon="shader" label="Editor type" />
      <Select label="Shader type" value="Object" icon="object" className="ml-[6px] h-[19px] w-[87px]" pad="pl-6 pt-px" />
      <nav className="ml-[13px] flex gap-4">
        {['View', 'Select', 'Add', 'Node'].map((m) => <MenuText key={m}>{m}</MenuText>)}
      </nav>
      <label className="ml-4 flex shrink-0 items-center gap-2 pt-px text-white">
        <CheckBox id="use-nodes" checked />
        Use Nodes
      </label>
      <div className="ml-[94px] mr-auto flex shrink-0 items-center">
        <Select label="Slot" value="Slot 1" className="h-[19px] w-[78px]" />
        <MenuButton icon="matprev" label="Browse material" className="ml-[7px] w-[31px] rounded-r-none" />
        <input aria-label="Material name" defaultValue="EdgeDetection" className="h-[19px] w-[119px] bg-[#1d1d1d] pl-[6px] pt-px outline-none" />
        <div className={clsx(group, 'rounded-l-none')}>
          <ToolButton icon="shield" label="Fake user" className="bg-[#595959] text-[#9c9c9c]" />
          <ToolButton icon="copy" label="New material" className="bg-[#595959]" />
          <ToolButton icon="close" label="Unlink material" className="bg-[#595959]" />
        </div>
        <ToolButton icon="pin" label="Pin" className="ml-2 text-[#8f8f8f]" />
      </div>
      <div className="flex items-center gap-[6px]">
        <ToolButton icon="up" label="Parent node tree" className="rounded-[4px] bg-[#4b4b4b] text-[#7a7a7a]" />
        <div className={toolGroup}>
          <ToolButton icon="magnet" label="Snap" className="bg-[#595959] text-[#9c9c9c]" />
          <ToolButton icon="nodeSnap" label="Snap element" />
          <Chevron className="mr-[3px]" />
        </div>
      </div>
    </div>
    <div className="relative flex-1 overflow-hidden">
      <NodeBackdrop />
      <Node title="Bevel" head="bg-[#a0343f]" className="left-[58px] top-[102px] w-[109px]">
        <Out label="Normal" color={vec} />
        <Field label="Samples:" value="4" className="mt-[7px]" />
        <Field label="Radius:" value="0.002" color={grey} className="mt-[2px]" />
        <In label="Normal" color={vec} />
      </Node>
      <Node title="Texture Coordinate" head="bg-[#a0343f]" className="left-[44px] top-[236px] w-[109px]">
        {['Generated', 'Normal', 'UV', 'Object', 'Camera', 'Window', 'Reflection'].map((l) => (
          <Out key={l} label={l} color={vec} />
        ))}
        <label className="mt-[7px] flex h-[17px] items-center justify-end gap-[3px] pr-[9px]">
          Objec
          <span className="relative flex h-[14px] w-[59px] items-center justify-between rounded-[3px] bg-[#1d1d1d] px-[2px]">
            <Icon name="object" className="h-3 w-3" />
            <input className="h-full w-6 outline-none" />
            <FaEyeDropper className="h-[10px] w-[10px]" />
          </span>
        </label>
        <label className="mt-[2px] flex h-[17px] items-center gap-[6px] pl-[11px]">
          <CheckBox id="from-instancer" className="h-[9px] w-[9px]" />
          From Instancer
        </label>
      </Node>
      <Node title="Subtract" head="bg-[#4788b3]" className="left-[261px] top-[110px] w-[109px]">
        <Out label="Vector" color={vec} />
        <Out label="Value" color={grey} />
        <NodeSelect value="Subtract" className="mt-[7px]" />
        <In label="Vector" color={vec} className="mt-[2px]" />
        <In label="Vector" color={vec} />
      </Node>
      <Node title="Noise Texture" head="bg-[#a05f34]" className="left-[267px] top-[277px] w-[109px]">
        <Out label="Color" color={yellow} />
        <Out label="Fac" color={grey} />
        <In label="Vector" color={vec} className="mt-[2px]" />
        <Field label="Scale:" value="50.000" color={grey} />
        <Field label="Detail:" value="2.000" color={grey} />
        <Field label="Distortion:" value="0.000" color={grey} />
      </Node>
      <ColorRamp className="left-[536px] top-[59px]" index="1" pos="0.141" stops={[5, 27]} end={165} />
      <ColorRamp className="left-[502px] top-[259px]" index="0" pos="0.373" stops={[64, 164]} end={164} dark />
      <Node title="Multiply" head="bg-[#4788b3]" className="left-[817px] top-[124px] w-[109px]">
        <Out label="Value" color={grey} />
        <NodeSelect value="Multiply" className="mt-[7px]" />
        <label className="mt-px flex h-[17px] items-center gap-[6px] pl-[11px]">
          <CheckBox id="clamp" className="h-[9px] w-[9px]" />
          Clamp
        </label>
        <In label="Value" color={grey} className="mt-[3px]" />
        <In label="Value" color={grey} />
      </Node>
      <Node title="Emission" head="bg-[#2f8f62]" className="left-[974px] top-[139px] w-[109px]">
        <Out label="Emission" color={green} />
        <In label="Color" color={yellow} className="mt-[3px]" />
        <Field label="Strength:" value="1.000" color={grey} />
      </Node>
      <MaterialOutput target="Cycles" head="bg-[#802b33]" className="left-[1116px] top-[103px]" />
      <Node title="Principled BSDF" head="bg-[#2f8f62]" className="left-[941px] top-[356px] w-[187px]">
        <Out label="BSDF" color={green} />
        <NodeSelect value="GGX" className="mt-[6px]" />
        <NodeSelect value="Christensen-Burley" className="mt-[3px]" />
        <Swatch label="Base Color" className="mt-[2px] h-[17px]" />
        <Field label="Subsurface:" value="0.000" color={grey} tight />
        <NodeSelect value="Subsurface Radius" color={vec} />
        <Swatch label="Subsurface Color" className="h-4" />
        <Field label="Metallic:" value="0.000" color={grey} tight />
        <Field label="Specular:" value="0.000" color={grey} tight />
        <Field label="Specular Tint:" value="0.000" color={grey} tight />
        <Field label="Roughness:" value="0.000" color={grey} tight />
      </Node>
      <MaterialOutput target="Eevee" head="bg-[#3f3f3f]" className="left-[1218px] top-[385px]" />
      <p className="absolute bottom-6 left-[29px] text-white">EdgeDetection</p>
      <RegionTab className="top-[15px]" />
      <RegionTab right className="top-[15px]" />
    </div>
  </section>
)

/* ---------- outliner ---------- */

type RowData = { name: string; depth: number; kind: 'collection' | 'mesh'; open?: boolean; checked?: boolean; on?: boolean; selected?: boolean; extra?: string[]; eye?: string }

const rows: RowData[] = [
  { name: 'SwordHD', depth: 1, kind: 'collection' },
  { name: 'SwordFinal', depth: 1, kind: 'collection' },
  { name: 'Barrel', depth: 0, kind: 'collection', open: true, checked: true, on: true, eye: 'eye' },
  { name: 'BarrelPH', depth: 1, kind: 'collection' },
  { name: 'BarrelFinal', depth: 1, kind: 'collection', open: true, checked: true, on: true, eye: 'eye' },
  { name: 'Barrel', depth: 2, kind: 'mesh', extra: ['wrench', 'meshData', 'lattice'], eye: 'eyeClosed' },
  { name: 'Barrel.001', depth: 2, kind: 'mesh', on: true, selected: true, extra: ['wrench', 'meshData'], eye: 'eye' },
  { name: 'Barrel 3', depth: 1, kind: 'collection' },
  { name: 'Bow', depth: 0, kind: 'collection' },
]

const extraColor: Record<string, string> = { wrench: 'text-[#78a8ff]', meshData: 'text-[#78e08a]', lattice: 'text-[#e08d50]' }

const OutlinerRow = ({ row, i }: { row: RowData; i: number }) => (
  <li className={clsx('flex h-5 items-center pl-5 pr-[9px] pt-px', row.selected ? 'bg-[#314e78]' : i % 2 ? 'bg-[#282828]' : 'bg-[#2d2d2d]')}>
    {row.depth > 0 && <span className="w-5 shrink-0" />}
    {row.depth > 1 && <span className="w-5 shrink-0" />}
    <span className="flex w-5 shrink-0 justify-center">
      {(row.open || row.kind === 'mesh') && <Triangle open={row.open} className={clsx('h-[7px] w-[7px]', row.on ? 'text-[#d0d0d0]' : 'text-[#7d7d7d]')} />}
    </span>
    {row.kind === 'collection' && (
      <span className="relative flex w-5 shrink-0 items-center justify-center">
        <input type="checkbox" aria-label={`Enable ${row.name}`} defaultChecked={row.checked} className="peer h-[11px] w-[11px] appearance-none border border-[#b0b0b0] checked:bg-[#e0e0e0]" />
        <svg viewBox="0 0 12 12" className="pointer-events-none absolute hidden h-[11px] w-[11px] peer-checked:block" fill="none" stroke="#222" strokeWidth="2">
          <path d="m2.500 6 2.500 3 4.500-6" />
        </svg>
      </span>
    )}
    <span className={clsx('flex h-[18px] w-5 shrink-0 items-center justify-center rounded-[4px]', row.selected && 'bg-[#72839f]')}>
      <Icon
        name={row.kind}
        className={clsx('h-[14px] w-[14px]', row.kind === 'mesh' ? (row.on ? 'text-[#e09662]' : 'text-[#86583a]') : row.on ? 'text-[#d0d0d0]' : 'text-[#707070]')}
      />
    </span>
    <span className={clsx('ml-1 whitespace-nowrap', row.selected ? 'text-[#ffaf29]' : row.on ? 'text-[#d0d0d0]' : 'text-[#707070]')}>{row.name}</span>
    {row.extra && (
      <span className={clsx('ml-6 flex gap-[5px]', !row.on && 'opacity-60')}>
        {row.extra.map((e) => <Icon key={e} name={e} className={clsx('h-[15px] w-[15px]', extraColor[e])} />)}
      </span>
    )}
    {row.eye && <Icon name={row.eye} className="ml-auto h-4 w-4 text-[#d0d0d0]" />}
  </li>
)

const Outliner = () => (
  <section className="flex h-[180px] shrink-0 flex-col overflow-hidden rounded-[6px] bg-[#282828]">
    <div className="flex h-[25px] shrink-0 items-center bg-[#393939] pl-[9px] pr-2">
      <MenuButton icon="outliner" label="Editor type" />
      <MenuButton icon="layers" label="Display mode" className="ml-[5px] w-[31px]" />
      <label className="ml-6 mr-auto flex h-[18px] w-[109px] items-center rounded-[4px] bg-[#1d1d1d] pl-[3px]">
        <Icon name="search" />
        <input aria-label="Filter outliner" className="min-w-0 flex-1 outline-none" />
      </label>
      <MenuButton icon="filter" label="Filter" />
      <ToolButton icon="newCollection" label="New collection" className="ml-[6px] rounded-[4px] bg-[#545454]" />
    </div>
    <div className="relative min-h-0 flex-1 overflow-hidden">
      <ul className="-mt-[13px]">
        {rows.map((row, i) => <OutlinerRow key={i} row={row} i={i} />)}
      </ul>
      <i className="absolute bottom-0 left-[29px] top-0 w-px bg-[#6a6a6a]/60" />
      <i className="absolute left-[69px] top-[86px] h-[33px] w-px bg-[#6a6a6a]" />
      <i className="absolute left-[72px] top-[98px] h-px w-3 bg-[#6a6a6a]" />
    </div>
  </section>
)

/* ---------- properties ---------- */

const propTabs = [
  [{ icon: 'tools', color: 'text-[#b8b8b8]' }],
  [
    { icon: 'render', color: 'text-[#e0e0e0]' },
    { icon: 'output', color: 'text-[#a3a3a3]' },
    { icon: 'layers', color: 'text-[#a3a3a3]' },
    { icon: 'scene', color: 'text-[#a3a3a3]' },
    { icon: 'world', color: 'text-[#c25056]' },
  ],
  [
    { icon: 'object', color: 'text-[#c2834d]' },
    { icon: 'modifier', color: 'text-[#5f8fd6]' },
    { icon: 'particles', color: 'text-[#5f8fd6]' },
    { icon: 'physics', color: 'text-[#5f8fd6]' },
    { icon: 'constraints', color: 'text-[#5f8fd6]' },
    { icon: 'meshData', color: 'text-[#63c76b]' },
    { icon: 'matprev', color: 'text-[#cc4f52]' },
  ],
  [{ icon: 'texture', color: 'text-[#cc4f52]' }],
]

const LabeledSelect = ({ label, value }: { label: string; value: string }) => (
  <div className="flex items-center gap-[9px]">
    <span className="flex-1 pt-px text-right">{label}</span>
    <Select label={label} value={value} className="h-[18px] w-[142px]" />
  </div>
)

type PanelProps = { title: string; open?: boolean; presets?: boolean; check?: boolean; checked?: boolean }

const PanelHeader = ({ title, open, presets, check, checked }: PanelProps) => (
  <div className="flex h-6 items-center pl-2 pr-2 pt-px text-[12px] text-[#cfcfcf]">
    <Triangle open={open} />
    {check ? (
      <label className="ml-[9px] flex items-center gap-[6px]">
        <CheckBox id={title} checked={checked} />
        {title}
      </label>
    ) : (
      <button className="ml-[7px]">{title}</button>
    )}
    <span className="ml-auto flex items-center gap-[15px]">
      {presets && <Icon name="presets" className="h-[14px] w-[14px] text-[#c4c4c4]" />}
      <svg viewBox="0 0 11 5" className="h-[5px] w-[11px]" stroke="#8a8a8a" strokeDasharray="1 2"><path d="M0 1h11M0 4h11" /></svg>
    </span>
  </div>
)

const panels: PanelProps[] = [
  { title: 'Light Paths', presets: true },
  { title: 'Volumes' },
  { title: 'Hair', check: true, checked: true },
  { title: 'Simplify', check: true },
  { title: 'Motion Blur', check: true },
  { title: 'Film' },
  { title: 'Performance' },
  { title: 'Bake' },
  { title: 'Freestyle', check: true },
  { title: 'Color Management' },
]

const Properties = () => (
  <section className="flex min-h-0 flex-1 flex-col overflow-hidden rounded-[6px] bg-[#424242]">
    <div className="flex h-[25px] shrink-0 items-center bg-[#393939] pl-[9px] pr-2">
      <MenuButton icon="properties" label="Editor type" />
      <Icon name="scene" className="ml-[13px] h-4 w-4 text-[#e0e0e0]" />
      <span className="ml-2">Scene</span>
      <ToolButton icon="pin" label="Pin" className="ml-auto text-[#8f8f8f]" />
    </div>
    <div className="flex flex-1">
      <nav className="flex w-7 shrink-0 flex-col gap-[10px] bg-[#202020] pl-[2px] pt-[9px]">
        {propTabs.map((g, i) => (
          <div key={i} className="flex flex-col gap-[2px]">
            {g.map(({ icon, color }) => (
              <button key={icon} aria-label={icon} className={clsx('flex h-[26px] items-center justify-center rounded-l-[4px]', color, icon === 'render' ? 'bg-[#424242]' : 'bg-[#2b2b2b]')}>
                {icon === 'modifier' ? <FaWrench className="h-[14px] w-[14px]" /> : <Icon name={icon} className="h-[14px] w-[14px]" />}
              </button>
            ))}
          </div>
        ))}
      </nav>
      <div className="min-w-0 flex-1">
        <div className="flex flex-col gap-[7px] px-2 py-[9px]">
          <LabeledSelect label="Render Engine" value="Cycles" />
          <LabeledSelect label="Feature Set" value="Supported" />
          <LabeledSelect label="Device" value="GPU Compute" />
        </div>
        <PanelHeader title="Sampling" open presets />
        <div className="bg-[#393939] pt-[9px]">
          <div className="flex flex-col gap-[7px] px-2">
            <LabeledSelect label="Integrator" value="Path Tracing" />
            <div className="flex flex-col gap-px">
              {[['Render', '128'], ['Viewport', '32']].map(([l, v], i) => (
                <label key={l} className="flex items-center gap-[9px]">
                  <span className="flex-1 pt-px text-right">{l}</span>
                  <input defaultValue={v} className={clsx('h-[18px] w-[142px] bg-[#595959] text-center outline-none', i ? 'rounded-b-[4px]' : 'rounded-t-[4px]')} />
                </label>
              ))}
            </div>
          </div>
          <div className="flex h-[34px] items-center gap-[7px] pl-[22px] pt-3">
            <Triangle />
            <button className="text-[#cfcfcf]">Advanced</button>
          </div>
        </div>
        {panels.map((p) => <PanelHeader key={p.title} {...p} />)}
      </div>
    </div>
  </section>
)

/* ---------- status bar ---------- */

const Mouse = ({ button, drag }: { button: 'left' | 'middle' | 'right'; drag?: boolean }) => (
  <svg viewBox="0 0 18 16" className="h-4 w-[18px] shrink-0" fill="none" stroke="#a3a3a3">
    <path d="M3.500.5h4q3 0 3 3v8q0 3-3 3h-4q-3 0-3-3v-8q0-3 3-3Z" />
    {button === 'left' && <path d="M1 7V3.500Q1 1 3.500 1H5v6Z" fill="#a3a3a3" />}
    {button === 'right' && <path d="M10 7V3.500Q10 1 7.500 1H6v6Z" fill="#a3a3a3" />}
    {button === 'middle' && <path d="M5 4h1v4H5Z" fill="#a3a3a3" />}
    {drag && <path d="M12.500 0q2 3 0 6M15.500 1v5" />}
  </svg>
)

const StatusBar = () => (
  <footer className="flex h-5 shrink-0 items-center bg-[#2e2e2e] pt-px text-[#989898]">
    <div className="flex w-[236px] items-center pl-3">
      <Mouse button="left" />
      <span className="ml-1 mr-[11px]">Select</span>
      <Mouse button="left" drag />
      <span className="ml-[7px]">Detach</span>
    </div>
    <div className="flex w-[236px] items-center pl-3"><Mouse button="middle" /></div>
    <div className="flex items-center pl-3">
      <Mouse button="right" />
      <span className="ml-1 mr-[11px]">Lazy Connect</span>
      <Mouse button="right" drag />
      <span className="ml-[7px]">Detach</span>
    </div>
    <p className="ml-auto whitespace-nowrap pr-[30px]">
      Scene Collection | Barrel.001 | Verts:4,296 | Faces:4,736 | Tris:8,496 | Objects:1/2 | Mem: 215.2 MB | v2.80.75
    </p>
  </footer>
)

const App = () => {
  return (
    <div className="flex h-screen w-full flex-col overflow-hidden bg-[#1c1c1c] font-['DejaVu_Sans_Condensed','DejaVu_Sans',sans-serif] text-[11px] leading-4 text-[#dcdcdc] [text-shadow:0_1px_1px_rgba(0,0,0,0.4)]">
      <TopBar />
      <main className="flex min-h-0 flex-1 gap-[3px] px-px py-[2px]">
        <div className="flex min-w-0 flex-1 flex-col gap-[3px]">
          <div className="flex h-[434px] shrink-0 gap-[3px]">
            <FileBrowser />
            <Viewport />
          </div>
          <div className="flex min-h-0 flex-1 gap-[3px]">
            <ImageEditor />
            <NodeEditor />
          </div>
        </div>
        <div className="flex w-[331px] shrink-0 flex-col gap-[3px]">
          <Outliner />
          <Properties />
        </div>
      </main>
      <StatusBar />
    </div>
  )
}

export default App
